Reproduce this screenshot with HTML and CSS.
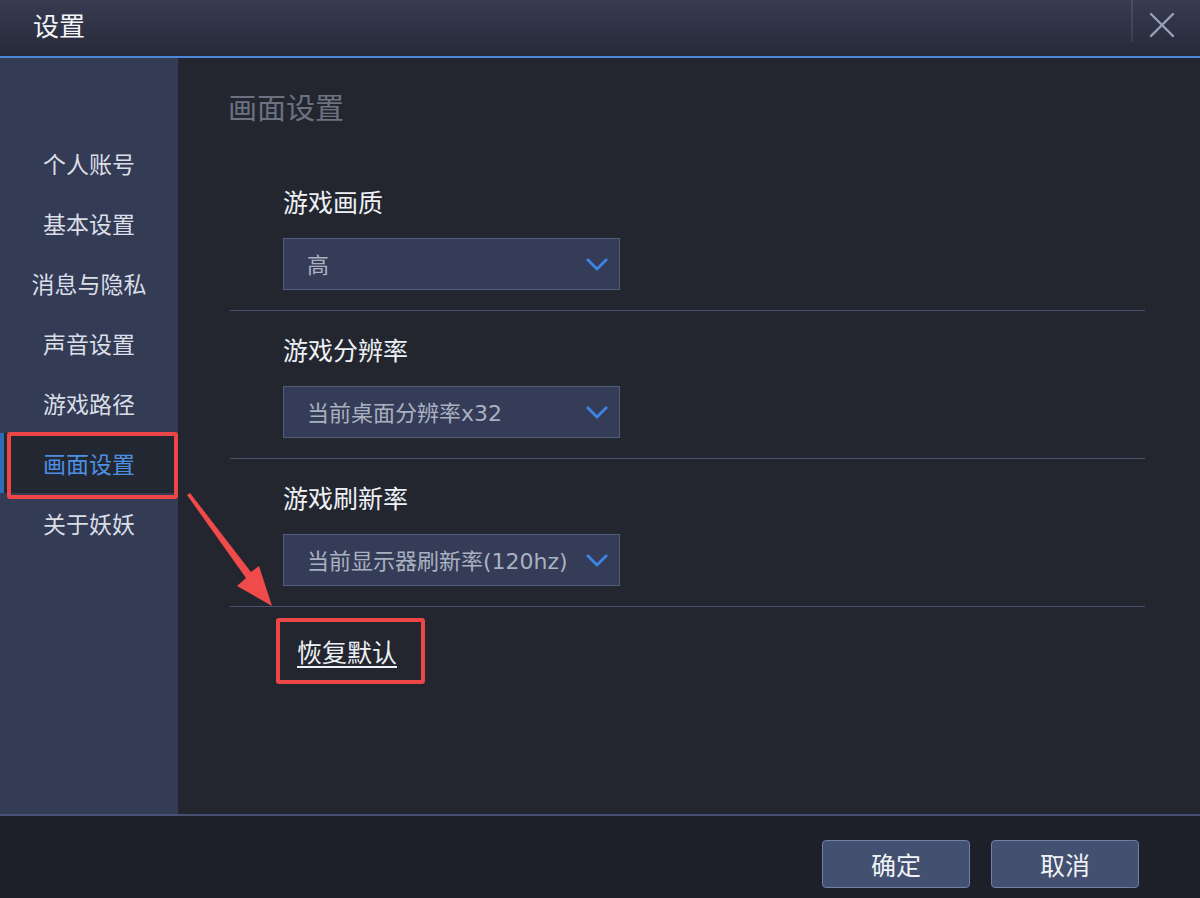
FILE: index.html
```html
<!DOCTYPE html>
<html lang="zh-CN">
<head>
<meta charset="utf-8">
<title>设置</title>
<link rel="stylesheet" href="styles.css">
</head>
<body>
<div class="window">
  <header class="titlebar">
    <div class="title">设置</div>
    <div class="title-actions">
      <span class="sep"></span>
      <button class="close" aria-label="关闭">
        <svg width="30" height="30" viewBox="0 0 30 30"><path d="M4 4 L26 26 M26 4 L4 26" stroke="#98a2bd" stroke-width="2.4" stroke-linecap="round" fill="none"/></svg>
      </button>
    </div>
  </header>
  <div class="main">
    <nav class="sidebar">
      <a class="nav-item">个人账号</a>
      <a class="nav-item">基本设置</a>
      <a class="nav-item">消息与隐私</a>
      <a class="nav-item">声音设置</a>
      <a class="nav-item">游戏路径</a>
      <a class="nav-item active">画面设置</a>
      <a class="nav-item">关于妖妖</a>
    </nav>
    <section class="content">
      <h1 class="heading">画面设置</h1>
      <div class="groups">
        <div class="group">
          <div class="label">游戏画质</div>
          <div class="select"><span>高</span><svg class="chev" width="24" height="14" viewBox="0 0 24 14"><path d="M2 2 L12 12 L22 2" stroke="#3d84e6" stroke-width="2.8" fill="none"/></svg></div>
        </div>
        <div class="group">
          <div class="label">游戏分辨率</div>
          <div class="select"><span>当前桌面分辨率x32</span><svg class="chev" width="24" height="14" viewBox="0 0 24 14"><path d="M2 2 L12 12 L22 2" stroke="#3d84e6" stroke-width="2.8" fill="none"/></svg></div>
        </div>
        <div class="group">
          <div class="label">游戏刷新率</div>
          <div class="select"><span>当前显示器刷新率(120hz)</span><svg class="chev" width="24" height="14" viewBox="0 0 24 14"><path d="M2 2 L12 12 L22 2" stroke="#3d84e6" stroke-width="2.8" fill="none"/></svg></div>
        </div>
        <a class="reset">恢复默认</a>
      </div>
    </section>
  </div>
  <footer class="footer">
    <button class="btn">确定</button>
    <button class="btn">取消</button>
  </footer>

  <div class="mark mark-nav"></div>
  <div class="mark mark-reset"></div>
  <svg class="arrow" width="1200" height="898" viewBox="0 0 1200 898">
    <polygon points="187,495 190,493 251,572 259,566 272,606 237,586 246,578" fill="#f04a4a"/>
  </svg>
</div>
</body>
</html>
```

FILE: styles.css
```css
* { box-sizing: border-box; }
html, body { margin: 0; padding: 0; }
body {
  background: #23262f;
  font-family: "Noto Sans CJK SC", "Noto Sans", sans-serif;
  color: #dfe3ea;
}
.window {
  position: relative;
  width: 1200px;
  height: 898px;
  display: flex;
  flex-direction: column;
  overflow: hidden;
}
.titlebar {
  height: 58px;
  flex: none;
  display: flex;
  align-items: flex-start;
  justify-content: space-between;
  background: linear-gradient(#383c51, #262938);
  border-bottom: 2px solid #4a86da;
}
.title {
  font-size: 26px;
  line-height: 50px;
  padding-left: 33px;
  color: #f2f4f8;
}
.title-actions {
  display: flex;
  align-items: flex-start;
  height: 56px;
}
.sep {
  width: 2px;
  height: 42px;
  background: linear-gradient(#4c5064, #3a3d4e);
}
.close {
  width: 67px;
  height: 50px;
  border: 0;
  background: transparent;
  padding: 0 9px 0 0;
  display: flex;
  align-items: center;
  justify-content: center;
}
.main {
  flex: 1;
  display: flex;
  min-height: 0;
}
.sidebar {
  width: 178px;
  flex: none;
  background: #343b55;
  padding-top: 75px;
  display: flex;
  flex-direction: column;
}
.nav-item {
  height: 60px;
  line-height: 60px;
  text-align: center;
  font-size: 23px;
  color: #d9dee7;
}
.nav-item.active {
  color: #4d8fe3;
  background: #232732;
  box-shadow: inset 4px 0 0 #2d6db5;
}
.content {
  flex: 1;
  padding: 28px 0 0 50px;
}
.heading {
  margin: 0;
  font-size: 29px;
  font-weight: normal;
  line-height: 40px;
  color: #6c7281;
}
.groups {
  width: 915px;
  margin: 37px 0 0 2px;
}
.group {
  padding: 20px 0 20px 53px;
  border-bottom: 1px solid #4a5273;
}
.label {
  font-size: 25px;
  line-height: 36px;
  color: #eef1f6;
  margin-bottom: 19px;
}
.select {
  width: 337px;
  height: 52px;
  background: #343c57;
  border: 1px solid #505c7c;
  display: flex;
  align-items: center;
  justify-content: space-between;
  padding: 0 10px 0 23px;
  font-family: "DejaVu Sans", "Noto Sans CJK SC", sans-serif;
  font-size: 22px;
  color: #aab1c1;
}
.select span { position: relative; top: -1px; white-space: nowrap; }
.chev { flex: none; }
.reset {
  display: inline-block;
  margin: 26px 0 0 67px;
  font-size: 25px;
  line-height: 36px;
  color: #eef1f6;
  text-decoration: underline;
  text-underline-offset: 4px;
  text-decoration-thickness: 2px;
}
.footer {
  height: 84px;
  flex: none;
  background: #1d2029;
  border-top: 2px solid #485175;
  display: flex;
  justify-content: flex-end;
  align-items: flex-start;
  gap: 21px;
  padding: 24px 61px 0 0;
}
.btn {
  width: 148px;
  height: 48px;
  background: #43506f;
  border: 1px solid #6c80a8;
  border-radius: 4px;
  color: #f0f2f6;
  font-family: inherit;
  font-size: 25px;
  padding: 0;
}
.mark {
  position: absolute;
  border: 4px solid #ec4646;
  border-radius: 3px;
}
.mark-nav { left: 7px; top: 432px; width: 171px; height: 67px; }
.mark-reset { left: 276px; top: 618px; width: 149px; height: 66px; }
.arrow {
  position: absolute;
  left: 0;
  top: 0;
  pointer-events: none;
}
```
